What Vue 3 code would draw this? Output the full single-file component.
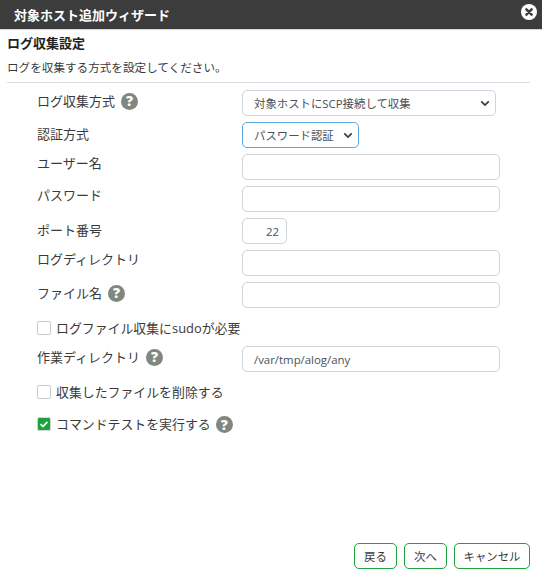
<script setup>
const rows = [
  { id: 'method', label: 'ログ収集方式', help: true, type: 'select', value: '対象ホストにSCP接続して収集', ctl: 'c-wide-select', lab: 'l-a' },
  { id: 'auth', label: '認証方式', type: 'select', value: 'パスワード認証', ctl: 'c-auth', lab: 'l-b' },
  { id: 'user', label: 'ユーザー名', type: 'input', value: '', ctl: 'c-wide', lab: 'l-c' },
  { id: 'pass', label: 'パスワード', type: 'input', value: '', ctl: 'c-wide', lab: 'l-c' },
  { id: 'port', label: 'ポート番号', type: 'input', value: '22', ctl: 'c-port', lab: 'l-b' },
  { id: 'dir', label: 'ログディレクトリ', type: 'input', value: '', ctl: 'c-wide', lab: 'l-c' },
  { id: 'file', label: 'ファイル名', help: true, type: 'input', value: '', ctl: 'c-wide', lab: 'l-a' }
]
</script>

<template>
  <div class="dialog">
    <header class="titlebar">
      <span class="title">対象ホスト追加ウィザード</span>
      <svg class="close" viewBox="0 0 16 16" aria-hidden="true">
        <circle cx="8" cy="8" r="8" fill="#fff" />
        <path d="M5.4 5.4l5.2 5.2M10.6 5.4l-5.2 5.2" stroke="#3c3c3c" stroke-width="2.6" stroke-linecap="round" />
      </svg>
    </header>

    <main class="body">
      <h2 class="heading">ログ収集設定</h2>
      <p class="desc">ログを収集する方式を設定してください。</p>
      <hr class="rule" />

      <form class="form" @submit.prevent>
        <div v-for="r in rows" :key="r.id" class="row">
          <div class="label" :class="r.lab">
            <span>{{ r.label }}</span>
            <span v-if="r.help" class="help">?</span>
          </div>
          <select v-if="r.type === 'select'" class="ctl select" :class="r.ctl">
            <option>{{ r.value }}</option>
          </select>
          <input v-else class="ctl input" :class="r.ctl" :value="r.value" />
        </div>

        <label class="check c1"><span class="box"></span>ログファイル収集にsudoが必要</label>

        <div class="row work">
          <div class="label l-a">
            <span>作業ディレクトリ</span>
            <span class="help">?</span>
          </div>
          <input class="ctl input c-wide" value="/var/tmp/alog/any" />
        </div>

        <label class="check c2"><span class="box"></span>収集したファイルを削除する</label>
        <label class="check c3">
          <span class="box on">
            <svg viewBox="0 0 14 14" aria-hidden="true"><path d="M3 7.2l2.8 2.8L11 4.6" fill="none" stroke="#fff" stroke-width="2" /></svg>
          </span>
          コマンドテストを実行する<span class="help">?</span>
        </label>
      </form>
    </main>

    <footer class="actions">
      <button class="btn b1">戻る</button>
      <button class="btn b2">次へ</button>
      <button class="btn b3">キャンセル</button>
    </footer>
  </div>
</template>

<style scoped>
.dialog {
  width: 542px;
  height: 575px;
  display: flex;
  flex-direction: column;
  background: #fff;
  color: #3a3a3a;
  font-family: "Open Sans", "Noto Sans CJK JP", sans-serif;
  font-size: 13px;
  overflow: hidden;
}
.titlebar {
  height: 30px;
  flex: none;
  background: #3c3c3c;
  border-bottom: 1px solid #d8d8d8;
  box-sizing: border-box;
  display: flex;
  align-items: center;
  justify-content: space-between;
  padding: 0 5px 0 14px;
}
.title { color: #fff; font-size: 13px; font-weight: 700; }
.close { width: 16px; height: 16px; margin-bottom: 5px; }
.body { flex: 1; padding: 0 12px 0 7px; }
.heading { margin: 4px 0 0; font-size: 13px; line-height: 18px; font-weight: 700; color: #222; }
.desc { margin: 7px 0 0; font-size: 11.6px; line-height: 17px; }
.rule { margin: 6px 0 0; border: 0; border-top: 1px solid #dcdce2; }
.form { display: flex; flex-direction: column; padding: 7px 0 0 30px; }
.row { display: flex; align-items: flex-start; margin-bottom: 6px; }
.label { width: 205px; flex: none; display: flex; align-items: center; gap: 6px; line-height: 18px; }
.l-a { padding-top: 2px; }
.l-b { padding-top: 3px; }
.l-c { padding-top: 0; }
.help {
  width: 17px;
  height: 17px;
  border-radius: 50%;
  background: #7f8780;
  color: #fff;
  display: inline-flex;
  align-items: center;
  justify-content: center;
  font-size: 14px;
  font-weight: 800;
  flex: none;
}
.ctl {
  height: 26px;
  box-sizing: border-box;
  border: 1px solid #ced4da;
  border-radius: 5px;
  background-color: #fff;
  color: #495057;
  font-family: inherit;
  font-size: 11.4px;
  padding: 0 11px;
  margin: 0;
  outline: none;
}
.select {
  appearance: none;
  padding-right: 24px;
  background-image: url("data:image/svg+xml,%3Csvg xmlns='http://www.w3.org/2000/svg' viewBox='0 0 12 8'%3E%3Cpath d='M1.5 1.5L6 6l4.5-4.5' fill='none' stroke='%23343a40' stroke-width='2'/%3E%3C/svg%3E");
  background-repeat: no-repeat;
  background-position: right 5px center;
  background-size: 10px 7px;
}
.c-wide-select { width: 254px; }
.c-auth { width: 117px; border-color: #5aa9e0; }
.c-wide { width: 258px; }
.c-port { width: 45px; text-align: right; padding: 0 7px 0 0; }
.check { display: flex; align-items: center; height: 18px; line-height: 18px; font-size: 12.9px; }
.box {
  width: 14px;
  height: 14px;
  box-sizing: border-box;
  border: 1px solid #ccc;
  border-radius: 2px;
  background: #fff;
  margin-right: 5px;
  flex: none;
  display: block;
}
.box svg { display: block; width: 12px; height: 12px; }
.box.on { background: #1aa33a; border-color: #d8d8d8; }
.c1 { margin: 5px 0 0; }
.work { margin: 9px 0 0; }
.c2 { margin: 11px 0 0; }
.c3 { margin: 14px 0 0; }
.c3 .help { margin: 1px 0 0 5px; }
.actions {
  flex: none;
  display: flex;
  justify-content: flex-end;
  gap: 7px;
  padding: 0 12px 6px 0;
}
.btn {
  height: 26px;
  box-sizing: border-box;
  border: 1px solid #1aa33a;
  border-radius: 5px;
  background: #fff;
  color: #3a3a3a;
  font-family: inherit;
  font-size: 11.4px;
  padding: 0;
}
.b1, .b2 { width: 43px; }
.b3 { width: 76px; }
</style>
